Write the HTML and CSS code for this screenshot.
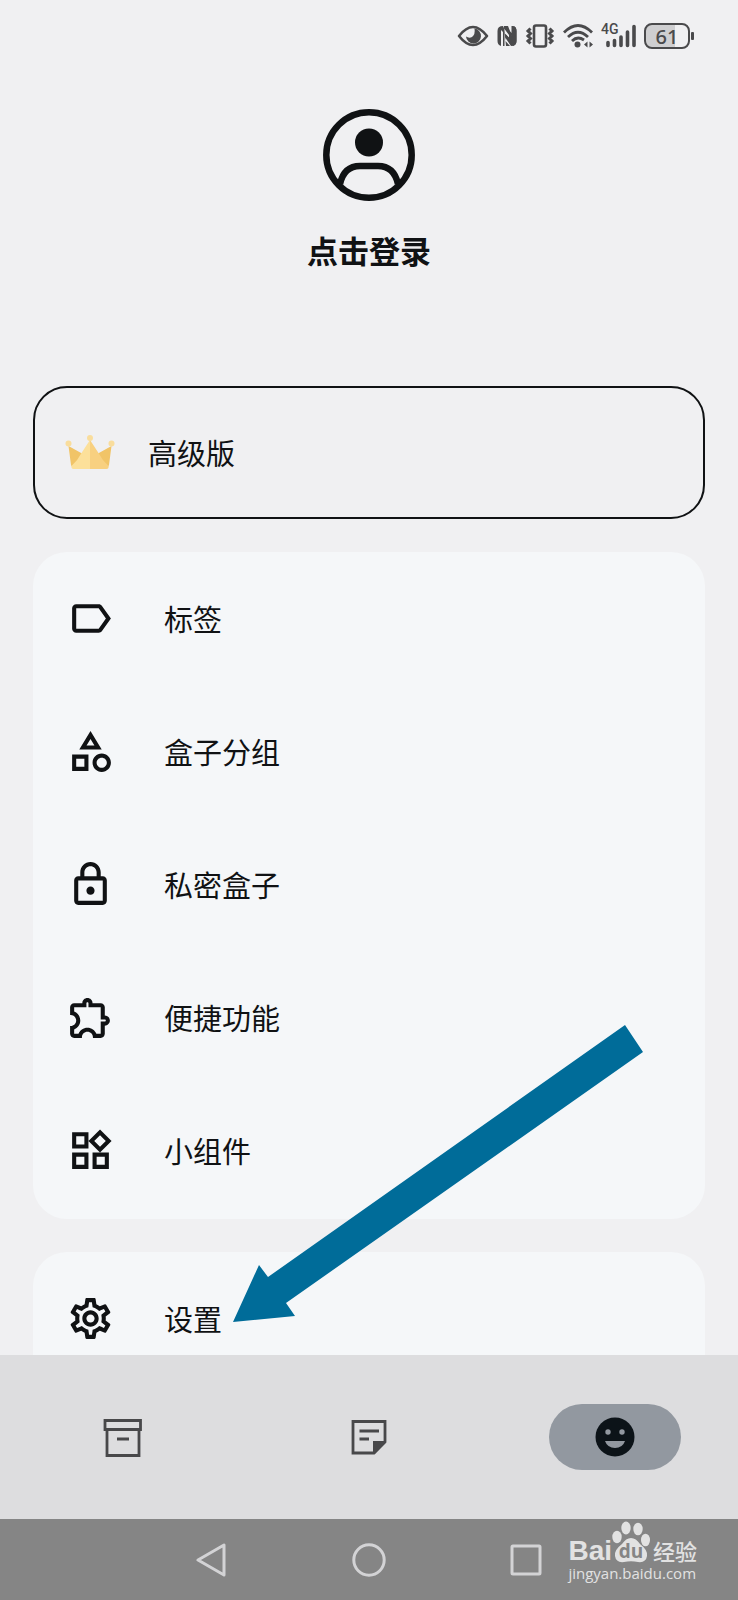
FILE: index.html
```html
<!DOCTYPE html>
<html lang="zh-CN">
<head>
<meta charset="utf-8">
<meta name="viewport" content="width=device-width, initial-scale=1">
<title>我的</title>
<link rel="stylesheet" href="styles.css">
</head>
<body>
<div class="app">
  <header class="status">
    <svg width="32" height="26" viewBox="0 0 32 26"><path d="M2 13Q16-5 30 13Q16 31 2 13Z" fill="none" stroke="currentColor" stroke-width="2.6" stroke-linejoin="round"/><path d="M17.500 5.500a7.500 7.500 0 1 1-8.500 8q3 2 6 .5q3.500-2.500 2.500-8.500z" fill="currentColor"/></svg>
    <svg width="22" height="26" viewBox="0 0 22 26" fill="currentColor"><path d="M7 3Q1.500 3 1.500 8V18Q1.500 22 5 23V7L7 9V23H8.500V10L13 15V12L7 4ZM8 3H12L17.500 17V3Q20.500 4 20.500 8V18Q20.500 23 15 23L9.500 15V18L14 23H10"/><path d="M9 3L15.500 10V3H17Q20.500 3.500 20.500 8V18Q20.500 22 17 23L9.500 14V11L15.500 17V13L7 4Z"/></svg>
    <svg width="30" height="26" viewBox="0 0 30 26" fill="none" stroke="currentColor"><rect x="9" y="2.500" width="12" height="21" rx="2" stroke-width="2.600"/><path d="M5.500 5.500L3 8L5.500 10.500L3 13L5.500 15.500L3 18L5.500 20.500M24.500 5.500L27 8L24.500 10.500L27 13L24.500 15.500L27 18L24.500 20.500" stroke-width="3"/></svg>
    <svg width="32" height="26" viewBox="0 0 32 26"><path d="M2 9.500Q16-4.500 30 9.500M6 14Q16 4.500 26 14M10 18Q15.500 12.500 22 17" fill="none" stroke="currentColor" stroke-width="2.800"/><circle cx="15.500" cy="21.500" r="3" fill="currentColor"/><path d="M22 21.500L25.500 18.500V24.500ZM31 21.500L27.500 18.500V24.500Z" fill="currentColor"/></svg>
    <span class="signal">
      <svg width="36" height="26" viewBox="0 0 36 26" fill="none" stroke="currentColor" stroke-width="3.600" stroke-linecap="round"><path d="M7 19.500V22.500M13.500 17.500V22.500M20 14V22.500M26.500 9V22.500M33 3.500V22.500"/></svg>
      <span class="network">4G</span>
    </span>
    <span class="battery">61</span>
  </header>

  <main class="content">
    <button class="profile" type="button">
      <svg width="92" height="92" viewBox="0 0 92 92" fill="none" stroke="currentColor" stroke-width="6.500"><circle cx="46" cy="46" r="42.700"/><circle cx="46" cy="33.500" r="14" fill="currentColor" stroke="none"/><path d="M17 75Q21 57 37 57H55Q71 57 75 75"/></svg>
      <span class="login">点击登录</span>
    </button>

    <button class="premium" type="button">
      <svg width="50" height="50" viewBox="0 0 50 50"><path d="M3.500 18L17 25.500L12 39H8Q6.500 39 6 37ZM46.500 18L33 25.500L38 39H42Q43.500 39 44 37Z" fill="#f1c467"/><path d="M25 12V41H8.500Q6 41 6.500 38Q13 32 16.500 25Q21 18 25 12Z" fill="#fce09a"/><path d="M25 12V41H41.500Q44 41 43.500 38Q37 32 33.500 25Q29 18 25 12Z" fill="#f8d080"/><g fill="#f9dd9d"><circle cx="3.500" cy="15.500" r="3"/><circle cx="25" cy="10" r="3"/><circle cx="46.500" cy="15.500" r="3"/></g></svg>
      <span class="label">高级版</span>
    </button>

    <nav class="card" aria-label="功能">
      <a class="row" href="#tags"><svg class="icon" viewBox="0 0 24 24"><path d="M17.630 5.840C17.270 5.330 16.670 5 16 5L5 5.010C3.900 5.010 3 5.900 3 7v10c0 1.100.9 1.990 2 1.990L16 19c.67 0 1.270-.33 1.630-.84L22 12l-4.370-6.160zM16 17H5V7h11l3.550 5L16 17z"/></svg><span class="label">标签</span></a>
      <a class="row" href="#groups"><svg class="icon" viewBox="0 0 24 24"><path d="M12 2l-5.500 9h11L12 2zm0 3.840L13.930 9h-3.870L12 5.840zM17.500 13c-2.490 0-4.500 2.010-4.500 4.500s2.010 4.500 4.500 4.500 4.500-2.010 4.500-4.500-2.010-4.500-4.500-4.500zm0 7c-1.380 0-2.500-1.120-2.500-2.500s1.120-2.500 2.500-2.500 2.500 1.120 2.500 2.500-1.120 2.500-2.500 2.500zM3 21.500h8v-8H3v8zm2-6h4v4H5v-4z"/></svg><span class="label">盒子分组</span></a>
      <a class="row" href="#private"><svg class="icon" viewBox="0 0 24 24"><path d="M18 8h-1V6c0-2.760-2.240-5-5-5S7 3.240 7 6v2H6c-1.100 0-2 .9-2 2v10c0 1.100.9 2 2 2h12c1.100 0 2-.9 2-2V10c0-1.100-.9-2-2-2zM9 6c0-1.660 1.340-3 3-3s3 1.340 3 3v2H9V6zm9 14H6V10h12v10zm-6-3c1.100 0 2-.9 2-2s-.9-2-2-2-2 .9-2 2 .9 2 2 2z"/></svg><span class="label">私密盒子</span></a>
      <a class="row" href="#shortcuts"><svg class="icon" viewBox="0 0 24 24"><path d="M10.500 4.500c.28 0 .5.220.5.500v2h6v6h2c.28 0 .5.220.5.500s-.22.500-.5.500h-2v6h-2.120c-.68-1.750-2.390-3-4.380-3s-3.700 1.250-4.380 3H4v-2.120c1.750-.68 3-2.390 3-4.380 0-1.990-1.240-3.700-2.990-4.380L4 7h6V5c0-.28.220-.5.500-.5m0-2C9.120 2.500 8 3.620 8 5H4c-1.100 0-1.990.9-1.990 2v3.800h.29c1.490 0 2.700 1.210 2.700 2.700s-1.210 2.700-2.700 2.700H2V20c0 1.100.9 2 2 2h3.800v-.3c0-1.490 1.210-2.700 2.700-2.700s2.700 1.210 2.700 2.700v.3H17c1.100 0 2-.9 2-2v-4c1.380 0 2.500-1.120 2.500-2.500S20.380 11 19 11V7c0-1.100-.9-2-2-2h-4c0-1.380-1.120-2.500-2.500-2.500z"/></svg><span class="label">便捷功能</span></a>
      <a class="row" href="#widgets"><svg class="icon" viewBox="0 0 24 24"><path d="M16.660 4.520l2.830 2.830-2.830 2.830-2.830-2.830 2.830-2.830M9 5v4H5V5h4m10 10v4h-4v-4h4M9 15v4H5v-4h4m7.660-13.310L11 7.340 16.660 13l5.660-5.660-5.660-5.650zM11 3H3v8h8V3zm10 10h-8v8h8v-8zm-10 0H3v8h8v-8z"/></svg><span class="label">小组件</span></a>
    </nav>

    <nav class="card" aria-label="其他">
      <a class="row" href="#settings"><svg class="icon" viewBox="0 0 24 24"><path d="M19.430 12.980c.04-.32.070-.64.070-.98 0-.34-.03-.66-.07-.98l2.110-1.650c.19-.15.240-.42.120-.64l-2-3.460c-.09-.16-.26-.25-.44-.25-.06 0-.12.010-.17.030l-2.490 1c-.52-.4-1.080-.73-1.690-.98l-.38-2.650C14.460 2.180 14.250 2 14 2h-4c-.25 0-.46.180-.49.420l-.38 2.650c-.61.250-1.170.590-1.690.980l-2.490-1c-.06-.02-.12-.03-.18-.03-.17 0-.34.090-.43.250l-2 3.460c-.13.220-.07.490.120.640l2.110 1.650c-.04.320-.07.650-.07.980 0 .33.030.660.070.980l-2.110 1.650c-.19.150-.24.420-.12.640l2 3.460c.09.160.260.250.440.250.06 0 .12-.01.170-.03l2.490-1c.52.400 1.080.730 1.690.980l.38 2.650c.03.240.240.420.490.420h4c.25 0 .46-.18.490-.42l.38-2.650c.61-.25 1.170-.59 1.690-.98l2.490 1c.06.020.120.030.180.030.17 0 .34-.09.430-.25l2-3.460c.12-.22.070-.49-.12-.64l-2.110-1.650zm-1.980-1.710c.04.310.050.520.050.730 0 .21-.02.430-.05.730l-.14 1.130.89.700 1.080.840-.7 1.210-1.270-.51-1.040-.42-.9.680c-.43.320-.84.560-1.250.730l-1.060.430-.16 1.130-.2 1.350h-1.400l-.19-1.350-.16-1.130-1.060-.43c-.43-.18-.83-.41-1.230-.71l-.91-.7-1.060.430-1.270.510-.7-1.210 1.080-.84.890-.7-.14-1.130c-.03-.31-.05-.54-.05-.74s.02-.43.050-.73l.14-1.130-.89-.7-1.080-.84.700-1.210 1.270.510 1.040.420.900-.68c.43-.32.840-.56 1.250-.73l1.060-.43.160-1.130.2-1.350h1.390l.19 1.350.16 1.130 1.060.430c.43.180.830.410 1.230.710l.91.700 1.060-.43 1.270-.51.700 1.210-1.070.850-.89.700.140 1.130zM12 8c-2.210 0-4 1.790-4 4s1.790 4 4 4 4-1.790 4-4-1.790-4-4-4zm0 6c-1.100 0-2-.9-2-2s.9-2 2-2 2 .9 2 2-.9 2-2 2z"/></svg><span class="label">设置</span>
        <svg class="pointer" width="412" height="300" viewBox="0 0 412 300" aria-hidden="true"><path d="M0 298L26 241L35 253L392 1L410 28L53 279L62 292Z" fill="#006c99"/></svg>
      </a>
    </nav>
  </main>

  <nav class="tabs" aria-label="主导航">
    <button class="tab" type="button" aria-label="盒子"><svg width="48" height="48" viewBox="0 0 48 48" fill="none" stroke="currentColor" stroke-width="2.800"><path d="M6 7.500H41.500V16.500H6ZM8 16.500V42.500H40V16.500M18 26H30"/></svg></button>
    <button class="tab" type="button" aria-label="笔记"><svg width="48" height="48" viewBox="0 0 48 48" fill="none" stroke="currentColor" stroke-width="2.800"><path d="M8 8.500H40V29L29 40H8ZM14.500 18H34M14.500 26H24"/><path d="M28 28H41V29.500L29.500 41H28Z" fill="currentColor" stroke="none"/></svg></button>
    <button class="tab" type="button" aria-label="我的" aria-current="page"><span class="pill"><svg width="48" height="48" viewBox="0 0 48 48"><circle cx="24" cy="24" r="19.500" fill="#0c1318"/><g fill="#9298a0"><circle cx="17" cy="19" r="2.700"/><circle cx="31" cy="19" r="2.700"/><path d="M14 28H34Q31.500 35 24 35T14 28Z"/></g></svg></span></button>
  </nav>

  <footer class="system">
    <button class="key" type="button" aria-label="返回"><svg width="34" height="34" viewBox="0 0 34 34"><path d="M29 2V32L3 17Z"/></svg></button>
    <button class="key" type="button" aria-label="主页"><svg width="34" height="34" viewBox="0 0 34 34"><circle cx="17" cy="17" r="15.200"/></svg></button>
    <button class="key" type="button" aria-label="最近任务"><svg width="34" height="34" viewBox="0 0 34 34"><rect x="3" y="3" width="28" height="28" rx="1"/></svg></button>
    <div class="watermark">
      <div class="brand"><span class="bai">Bai</span><span class="paw"><svg width="38" height="42" viewBox="0 0 38 42" fill="currentColor"><ellipse cx="5" cy="16" rx="4.700" ry="6.200"/><ellipse cx="14" cy="7" rx="4.700" ry="6.500"/><ellipse cx="26" cy="8" rx="4.700" ry="6.300"/><ellipse cx="33.500" cy="19" rx="4.500" ry="6.300"/><path d="M19 17Q24 17 28 23Q36 29 35 35Q34 42 26 41Q19 39.500 12 41Q4 42 3 35Q2 29 10 23Q14 17 19 17Z"/></svg><span class="du">du</span></span><span class="jingyan">经验</span></div>
      <div class="url">jingyan.baidu.com</div>
    </div>
  </footer>
</div>
</body>
</html>
```
FILE: styles.css
```css
* {
  box-sizing: border-box;
}

body {
  margin: 0;
  background: #f0f0f2;
  color: #101214;
  font-family: "Noto Sans CJK SC", sans-serif;
}

button {
  margin: 0;
  padding: 0;
  border: 0;
  background: none;
  color: inherit;
  font: inherit;
}

svg {
  display: block;
  flex: none;
}

.app {
  display: flex;
  flex-direction: column;
  height: 100vh;
}

.status {
  display: flex;
  flex: none;
  align-items: center;
  justify-content: flex-end;
  gap: 7px;
  height: 71px;
  padding-right: 48px;
  color: #4a4a4c;
}

.signal {
  position: relative;
}

.network {
  position: absolute;
  top: 0;
  left: 0;
  font: 500 14px/13px Roboto, sans-serif;
}

.battery {
  position: relative;
  width: 46px;
  height: 26px;
  border: 2px solid #4a4a4c;
  border-radius: 8px;
  background: linear-gradient(90deg, #cfcfd1 70%, transparent 70%);
  font: 500 20px/23px "Noto Sans", sans-serif;
  text-align: center;
}

.battery::after {
  content: "";
  position: absolute;
  top: 7px;
  right: -6px;
  width: 3px;
  height: 8px;
  border-radius: 1px;
  background: #4a4a4c;
}

.content {
  display: flex;
  flex: 1;
  flex-direction: column;
  gap: 33px;
  min-height: 0;
  padding: 38px 33px 0;
  overflow: hidden;
}

.profile {
  display: flex;
  flex: none;
  flex-direction: column;
  align-items: center;
  align-self: center;
  gap: 27px;
  margin-bottom: 81px;
}

.login {
  font-size: 31px;
  font-weight: 700;
  line-height: 44px;
}

.label {
  padding-bottom: 2px;
}

.premium {
  display: flex;
  flex: none;
  align-items: center;
  gap: 33px;
  height: 133px;
  padding: 0 30px;
  border: 2px solid #101214;
  border-radius: 34px;
  font-size: 29px;
}

.card {
  flex: none;
  padding-bottom: 2px;
  border-radius: 34px;
  background: #f5f7f9;
}

.row {
  position: relative;
  display: flex;
  align-items: center;
  gap: 49px;
  height: 133px;
  padding: 0 33px;
  color: inherit;
  font-size: 29px;
  text-decoration: none;
}

.icon {
  width: 49px;
  height: 49px;
  fill: currentColor;
}

.pointer {
  position: absolute;
  bottom: 61px;
  left: 200px;
  z-index: 1;
}

.tabs {
  display: flex;
  flex: none;
  height: 164px;
  background: #dddddf;
  color: #48484a;
}

.tab {
  display: flex;
  flex: 1;
  align-items: center;
  justify-content: center;
}

.pill {
  display: flex;
  align-items: center;
  justify-content: center;
  width: 132px;
  height: 66px;
  border-radius: 33px;
  background: #9298a0;
}

.system {
  position: relative;
  display: flex;
  flex: none;
  align-items: center;
  justify-content: center;
  gap: 123px;
  height: 81px;
  background: #858585;
  color: #d3d3d5;
}

.key svg {
  fill: none;
  stroke: currentColor;
  stroke-width: 3px;
  stroke-linejoin: round;
}

.watermark {
  position: absolute;
  top: 2px;
  right: 41px;
  color: #e2e2e2;
}

.brand {
  display: flex;
  align-items: flex-end;
  height: 42px;
}

.bai {
  font: 700 28px/24px "Liberation Sans", sans-serif;
}

.paw {
  position: relative;
}

.du {
  position: absolute;
  right: 0;
  bottom: 2px;
  left: 0;
  color: #858585;
  font: 700 19px/20px "Open Sans", sans-serif;
  text-align: center;
}

.jingyan {
  margin-left: 3px;
  font-size: 22px;
  font-weight: 500;
  line-height: 26px;
}

.url {
  font: 15px/20px "Open Sans", sans-serif;
}
```
